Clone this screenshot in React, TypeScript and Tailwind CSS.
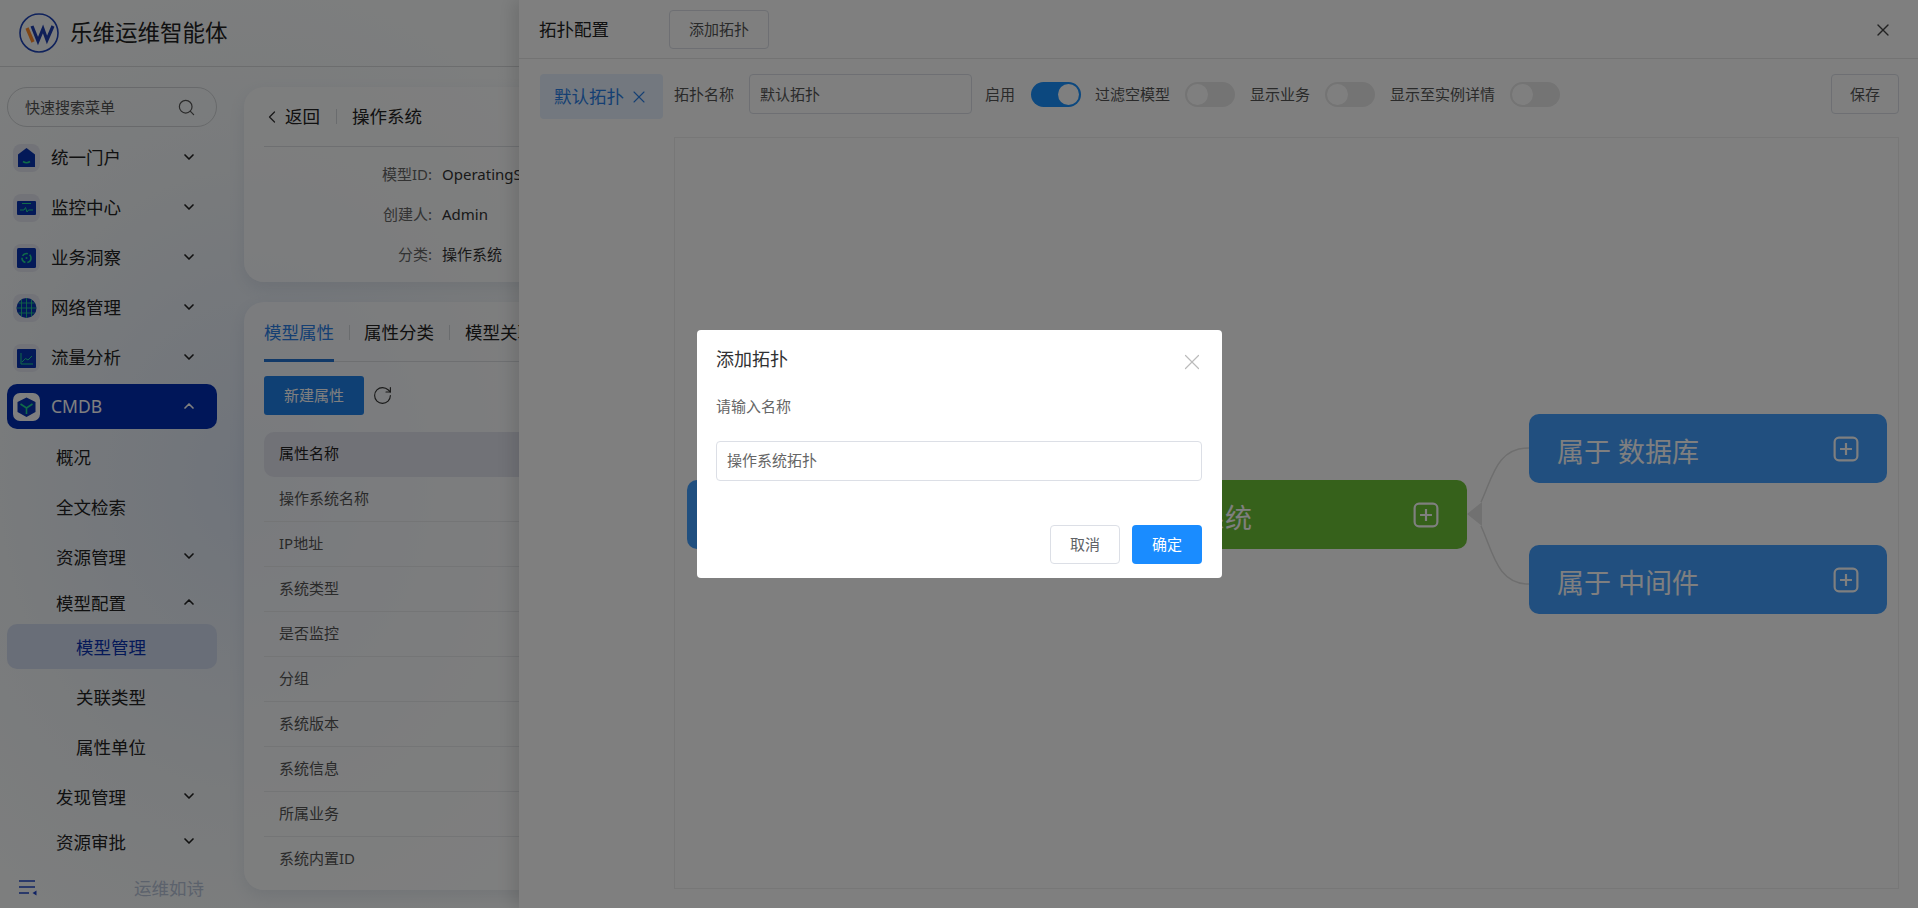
import { ChevronDown, ChevronUp, ChevronLeft, Search, RotateCw, X } from "lucide-react";

const HouseIcon = () => (
  <svg viewBox="0 0 27 28" className="w-[27px] h-[28px]">
    <path d="M13.5 4 L22 10.5 V23 H5 V10.5 Z" fill="#0732b0" />
    <path d="M10 17.5 q3.5 2.5 7 0" stroke="#20d890" strokeWidth="1.6" fill="none" />
  </svg>
);

const MonitorIcon = () => (
  <svg viewBox="0 0 27 28" className="w-[27px] h-[28px]">
    <rect x="4" y="7" width="19" height="14" rx="1" fill="#0732b0" />
    <path d="M9 9.5 H18 M7 16 H11 L12.5 13.5 L14 18 L15.5 16 H20" stroke="#20d890" strokeWidth="1" fill="none" />
  </svg>
);

const InsightIcon = () => (
  <svg viewBox="0 0 27 28" className="w-[27px] h-[28px]">
    <rect x="4" y="4" width="19" height="20" rx="1.5" fill="#0732b0" />
    <circle cx="13.5" cy="14" r="4.5" stroke="#20d890" strokeWidth="1.6" strokeDasharray="6 2" fill="none" />
    <circle cx="13.5" cy="14" r="1" fill="#20d890" />
  </svg>
);

const GlobeIcon = () => (
  <svg viewBox="0 0 27 28" className="w-[27px] h-[28px]">
    <circle cx="13.5" cy="14" r="10" fill="#0732b0" />
    <path d="M4 14 H23 M5.5 9 H21.5 M5.5 19 H21.5 M13.5 4 V24 M8.5 5.5 V22.5 M18.5 5.5 V22.5" stroke="#20c890" strokeWidth="0.9" fill="none" />
  </svg>
);

const ChartIcon = () => (
  <svg viewBox="0 0 27 28" className="w-[27px] h-[28px]">
    <rect x="4" y="5" width="19" height="19" rx="1" fill="#0732b0" />
    <path d="M8 9 V20 H20 M9 18 L12.5 14.5 L15 16 L19 12" stroke="#20d890" strokeWidth="1" fill="none" />
  </svg>
);

const CubeIcon = () => (
  <svg viewBox="0 0 27 28" className="w-[27px] h-[28px]">
    <path d="M13.5 4.5 L22.5 9 V19 L13.5 24 L4.5 19 V9 Z" fill="#0732b0" />
    <path d="M7.5 11 L13.5 15 L19.5 11 M13.5 15 V21" stroke="#20d890" strokeWidth="1.6" fill="none" />
  </svg>
);

const PlusBox = () => (
  <svg viewBox="0 0 24 24" className="w-[26px] h-[26px] -mr-px" fill="none" stroke="#fff" strokeWidth="2">
    <rect x="1.5" y="1.5" width="21" height="21" rx="4" />
    <path d="M12 6.5 V17.5 M6.5 12 H17.5" />
  </svg>
);

const mainMenu = [
  { label: "统一门户", icon: <HouseIcon /> },
  { label: "监控中心", icon: <MonitorIcon /> },
  { label: "业务洞察", icon: <InsightIcon /> },
  { label: "网络管理", icon: <GlobeIcon /> },
  { label: "流量分析", icon: <ChartIcon /> },
];

const attrRows = ["操作系统名称", "IP地址", "系统类型", "是否监控", "分组", "系统版本", "系统信息", "所属业务", "系统内置ID"];

const infoRows = [
  { label: "模型ID:", value: "OperatingSystem" },
  { label: "创建人:", value: "Admin" },
  { label: "分类:", value: "操作系统" },
];

const Toggle = ({ on }: { on?: boolean }) =>
  on ? (
    <span className="flex items-center justify-end w-[50px] h-[25px] rounded-full bg-[#1890ff] pr-[2px]">
      <span className="w-[21px] h-[21px] rounded-full bg-white" />
    </span>
  ) : (
    <span className="flex items-center w-[50px] h-[25px] rounded-full bg-[#e8e8e8] pl-[2px]">
      <span className="w-[21px] h-[21px] rounded-full bg-white" />
    </span>
  );

const TopoNode = ({ text, className }: { text: string; className: string }) => (
  <div className={`absolute w-[358px] h-[69px] rounded-[10px] flex items-center justify-between pr-[29px] text-white text-[27px] ${className}`}>
    <span className="pt-[8px] whitespace-nowrap">{text}</span>
    <PlusBox />
  </div>
);

export default function App() {
  return (
    <div className="relative w-[1918px] h-[908px] overflow-hidden text-[15px] text-[#222] bg-[radial-gradient(ellipse_420px_520px_at_250px_480px,#dfe8f6_0%,#f2f6f9_60%,#fbfdfd_100%)] font-['Noto_Sans','Noto_Sans_CJK_SC',sans-serif]">
      {/* top bar */}
      <header className="h-[67px] flex items-center gap-[11px] pl-[19px] border-b border-[#d8dadc]">
        <svg viewBox="0 0 40 40" className="w-10 h-10">
          <circle cx="20" cy="20" r="19" fill="none" stroke="#1f44b8" strokeWidth="1.6" />
          <path d="M8 15 L14 29" stroke="#ff8a2a" strokeWidth="3.4" />
          <path d="M13 13 L19 28 L24 16 L28 27 L34 13" stroke="#1f3fb0" strokeWidth="3.2" fill="none" />
        </svg>
        <span className="text-[22.5px] text-[#222]">乐维运维智能体</span>
      </header>

      <div className="flex h-[841px]">
        {/* sidebar */}
        <aside className="w-[224px] shrink-0 flex flex-col">
          <div className="mt-5 ml-[7px] w-[210px] h-10 rounded-full border border-[#d0d3d6] flex items-center justify-between pl-[17px] pr-[20px] text-[#555]">
            <span>快速搜索菜单</span>
            <Search size={19} strokeWidth={1.5} className="text-[#555]" />
          </div>
          <nav className="mt-[7px] ml-[7px] w-[210px] text-[17.5px]">
            {mainMenu.map((m) => (
              <div key={m.label} className="h-[45px] mb-[5px] pt-[2px] flex items-center pl-[6px] pr-[20px]">
                <span className="w-[27px] h-[28px] rounded-[8px] bg-[#e4e6f0] flex items-center justify-center">{m.icon}</span>
                <span className="ml-[11px] flex-1">{m.label}</span>
                <ChevronDown size={16} strokeWidth={2.5} className="mb-[2px]" />
              </div>
            ))}
            <div className="h-[45px] mb-[5px] flex items-center pl-[6px] pr-[20px] rounded-[10px] bg-[#002db2] text-white">
              <span className="w-[27px] h-[28px] rounded-[7px] bg-white flex items-center justify-center"><CubeIcon /></span>
              <span className="ml-[11px] flex-1">CMDB</span>
              <ChevronUp size={16} strokeWidth={2.5} className="mb-[2px]" />
            </div>
            <div className="h-[45px] mb-[5px] pt-[2px] flex items-center pl-[49px]">概况</div>
            <div className="h-[45px] mb-[5px] pt-[2px] flex items-center pl-[49px]">全文检索</div>
            <div className="h-[45px] pt-[2px] flex items-center justify-between pl-[49px] pr-[20px]">
              资源管理
              <ChevronDown size={16} strokeWidth={2.5} className="mb-[4px]" />
            </div>
            <div className="h-[45px] flex items-center justify-between pl-[49px] pr-[20px]">
              <span className="pt-[3px]">模型配置</span>
              <ChevronUp size={16} strokeWidth={2.5} />
            </div>
            <div className="h-[45px] mb-[5px] pt-[2px] flex items-center pl-[69px] rounded-[10px] bg-[#d3dcf0] text-[#0a33b0]">模型管理</div>
            <div className="h-[45px] mb-[5px] pt-[2px] flex items-center pl-[69px]">关联类型</div>
            <div className="h-[45px] mb-[5px] pt-[2px] flex items-center pl-[69px]">属性单位</div>
            <div className="h-[45px] pt-[2px] flex items-center justify-between pl-[49px] pr-[20px]">
              发现管理
              <ChevronDown size={16} strokeWidth={2.5} className="mb-[4px]" />
            </div>
            <div className="h-[45px] pt-[2px] flex items-center justify-between pl-[49px] pr-[20px]">
              资源审批
              <ChevronDown size={16} strokeWidth={2.5} className="mb-[4px]" />
            </div>
          </nav>
          <div className="mt-auto h-10 flex items-center justify-between pl-[19px] pr-5">
            <svg viewBox="0 0 18 18" className="w-[18px] h-[18px]">
              <path d="M0 2 H16 M0 8 H16 M0 14 H10" stroke="#1f44c8" strokeWidth="1.6" />
              <path d="M17.5 11.5 V16.5 L13.5 14 Z" fill="#1f44c8" />
            </svg>
            <span className="text-[17.5px] text-[#b8c4d8]">运维如诗</span>
          </div>
        </aside>

        {/* page content, mostly under the drawer */}
        <main className="pl-5 pt-5 w-[1400px]">
          <section className="h-[195px] rounded-[20px] bg-white/60 shadow-[0_6px_16px_rgba(60,80,120,0.10)] px-5">
            <div className="h-[60px] flex items-center border-b border-[#dcdfe3] text-[17.5px]">
              <ChevronLeft size={20} strokeWidth={1.5} className="-ml-[2px] text-[#333]" />
              <span className="ml-[3px]">返回</span>
              <span className="ml-4 mr-[15px] w-px h-[15px] bg-[#d5d8dc]" />
              <span>操作系统</span>
            </div>
            <div className="pt-2">
              {infoRows.map((r) => (
                <div key={r.label} className="h-10 pb-[2px] flex items-center">
                  <span className="w-[168px] text-right text-[#666]">{r.label}</span>
                  <span className="ml-[10px] text-[#333]">{r.value}</span>
                </div>
              ))}
            </div>
          </section>

          <section className="mt-5 h-[588px] rounded-[20px] bg-white/60 shadow-[0_6px_16px_rgba(60,80,120,0.10)] px-5">
            <div className="h-[60px] flex items-center border-b border-[#dcdfe3] text-[17.5px] pt-[2px]">
              <span className="relative text-[#2b7fe6] h-full flex items-center">
                模型属性
                <span className="absolute left-0 right-0 -bottom-[1px] h-[3px] bg-[#2272d0]" />
              </span>
              <span className="ml-[15px] mr-[14px] w-px h-[15px] bg-[#d5d8dc]" />
              <span>属性分类</span>
              <span className="mx-[15px] w-px h-[15px] bg-[#d5d8dc]" />
              <span>模型关联</span>
            </div>
            <div className="mt-[14px] flex items-center">
              <button className="w-[100px] h-[39px] rounded-[3px] bg-[#1f80e8] text-white">新建属性</button>
              <RotateCw size={21} strokeWidth={1.3} className="ml-[8px] text-[#333]" />
            </div>
            <div className="mt-[17px] h-[45px] pb-[3px] flex items-center pl-[15px] rounded-[10px] bg-[#e2e4ee]">属性名称</div>
            {attrRows.map((a) => (
              <div key={a} className="h-[45px] pb-[2px] flex items-center pl-[15px] border-b border-[#e8eaed] text-[#555] last:border-b-0">{a}</div>
            ))}
          </section>
        </main>
      </div>

      {/* drawer */}
      <div className="absolute left-[519px] top-0 w-[1399px] h-[908px] bg-white shadow-[-6px_0_16px_rgba(0,0,0,0.12)]">
        <div className="h-[59px] flex items-center pl-5 pr-[24px] border-b border-[#e6e6e6]">
          <span className="text-[17.5px]">拓扑配置</span>
          <button className="ml-[60px] w-[100px] h-[39px] rounded-[4px] border border-[#dcdfe6] text-[#555]">添加拓扑</button>
          <X size={20} strokeWidth={1.6} className="ml-auto mr-px mt-px text-[#444]" />
        </div>
        <div className="mt-[15px] flex items-start pl-[21px] pr-[19px]">
          <div className="w-[123px] h-[45px] rounded-[4px] bg-[#e6f1ff] flex items-center pl-[14px] text-[17.5px] text-[#2b7fe6]">
            默认拓扑
            <X size={20} strokeWidth={1.3} className="ml-[5px]" />
          </div>
          <div className="ml-[11px] h-10 flex-1 flex items-center text-[#555]">
            <span>拓扑名称</span>
            <span className="ml-[15px] w-[223px] h-10 rounded-[4px] border border-[#dcdfe6] flex items-center pl-[10px]">默认拓扑</span>
            <span className="ml-[13px]">启用</span>
            <span className="ml-4"><Toggle on /></span>
            <span className="ml-[14px]">过滤空模型</span>
            <span className="ml-[15px]"><Toggle /></span>
            <span className="ml-[15px]">显示业务</span>
            <span className="ml-[15px]"><Toggle /></span>
            <span className="ml-[15px]">显示至实例详情</span>
            <span className="ml-[15px]"><Toggle /></span>
            <button className="ml-auto w-[68px] h-10 rounded-[4px] border border-[#dcdfe6]">保存</button>
          </div>
        </div>
        <div className="relative ml-[155px] mr-[19px] mt-[18px] h-[752px] border border-[#eeeeee]">
          <div className="absolute left-[12px] top-[342px] w-[358px] h-[69px] rounded-[10px] bg-[#409eff]" />
          <TopoNode text="操作系统" className="left-[434px] top-[342px] pl-[35px] bg-[#6cc236]" />
          <TopoNode text="属于 数据库" className="left-[854px] top-[276px] pl-[28px] bg-[#429eff]" />
          <TopoNode text="属于 中间件" className="left-[854px] top-[407px] pl-[28px] bg-[#429eff]" />
          <svg viewBox="0 0 62 180" className="absolute left-[792px] top-[288px] w-[62px] h-[180px]" fill="none">
            <path d="M14 76 C 26 50, 30 22, 62 22" stroke="#dddddd" strokeWidth="1.5" />
            <path d="M14 100 C 26 126, 30 158, 62 158" stroke="#dddddd" strokeWidth="1.5" />
            <path d="M0 88 L15 76 V100 Z" fill="#e2e2e2" />
          </svg>
        </div>
      </div>

      {/* mask */}
      <div className="absolute inset-0 bg-black/50" />

      {/* add topology dialog */}
      <div className="absolute left-[697px] top-[330px] w-[525px] h-[248px] rounded-[4px] bg-white pl-[19px] pr-[20px]">
        <div className="h-[58px] flex items-center justify-between">
          <span className="text-[18px] text-[#303133]">添加拓扑</span>
          <X size={26} strokeWidth={1.1} className="mt-[6px] -mr-[3px] text-[#bbbbbb]" />
        </div>
        <div className="mt-[7px] text-[15px] text-[#666]">请输入名称</div>
        <div className="mt-[23px] h-10 rounded-[4px] border border-[#dcdfe6] flex items-center pl-[10px] text-[#666]">操作系统拓扑</div>
        <div className="mt-[44px] flex justify-end gap-3">
          <button className="w-[70px] h-[39px] rounded-[4px] border border-[#dcdfe6] text-[#606266]">取消</button>
          <button className="w-[70px] h-[39px] rounded-[4px] bg-[#1a8cff] text-white">确定</button>
        </div>
      </div>
    </div>
  );
}
